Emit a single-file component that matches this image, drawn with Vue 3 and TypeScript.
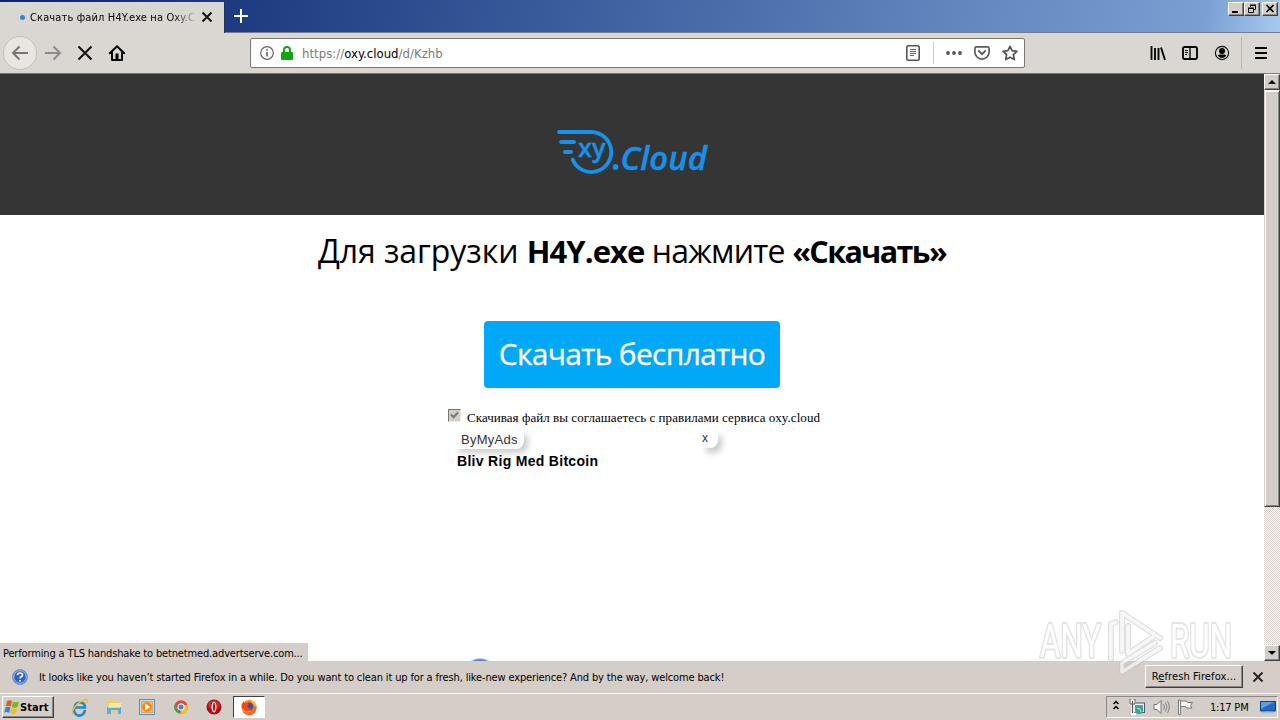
<script setup lang="ts">
interface Part { text: string; kind: string }
const heading: Part[] = [
  { text: 'Для загрузки ', kind: 'plain' },
  { text: 'H4Y.exe', kind: 'file' },
  { text: ' нажмите ', kind: 'verb' },
  { text: '«Скачать»', kind: 'action' },
]
</script>

<template>
  <div class="desktop">
    <header class="tabstrip">
      <div class="tab">
        <i class="busy"></i>
        <span class="tab-title">Скачать файл H4Y.exe на Oxy.C</span>
        <svg class="tab-close" width="12" height="12" viewBox="0 0 12 12"><path d="M1.500 1.500l9 9m0-9l-9 9" stroke="#111" stroke-width="1.900" /></svg>
      </div>
      <svg class="newtab" width="14" height="14" viewBox="0 0 14 14"><path d="M7 0v14M0 7h14" stroke="#fff" stroke-width="2" /></svg>
      <div class="winbtns">
        <span class="wb"><svg width="14" height="12" viewBox="0 0 14 12"><path d="M3 9h6" stroke="#000" stroke-width="2" /></svg></span>
        <span class="wb"><svg width="14" height="12" viewBox="0 0 14 12"><path d="M5.500 4V2.500h5v4H9M5 2h6M3.500 5.500h5v4h-5zM3 5h6" fill="none" stroke="#000" /></svg></span>
        <span class="wb last"><svg width="14" height="12" viewBox="0 0 14 12"><path d="M3.500 2l7 7m0-7l-7 7" stroke="#000" stroke-width="1.600" /></svg></span>
      </div>
    </header>

    <nav class="toolbar">
      <div class="navs">
        <span class="back"><svg width="18" height="16" viewBox="0 0 18 16"><path d="M17 8H2m6.500-6.500L2 8l6.500 6.500" fill="none" stroke="#777" stroke-width="2" /></svg></span>
        <svg class="fwd" width="18" height="16" viewBox="0 0 18 16"><path d="M1 8h15M9.500 1.500L16 8l-6.500 6.500" fill="none" stroke="#8d8b88" stroke-width="2" /></svg>
        <svg class="stop" width="16" height="16" viewBox="0 0 16 16"><path d="M1.500 1.500l13 13m0-13l-13 13" stroke="#111" stroke-width="2.100" /></svg>
        <svg class="home" width="16" height="16" viewBox="0 0 16 16"><path d="M.8 8.300L8 1.200l7.200 7.100M3 7v7.900h10V7" fill="none" stroke="#050505" stroke-width="2" stroke-linejoin="round" stroke-linecap="round" /><path d="M6.500 8.500h3V14h-3z" /></svg>
      </div>
      <div class="urlbar">
        <svg class="info" width="14" height="14" viewBox="0 0 14 14"><circle cx="7" cy="7" r="6.300" fill="none" stroke="#666" stroke-width="1.200" /><path d="M7 6v4.500M7 3v1.700" stroke="#666" stroke-width="1.600" /></svg>
        <svg class="lock" width="12" height="14" viewBox="0 0 12 14"><path d="M3 7V4a3 3 0 016 0v3" fill="none" stroke="#12a512" stroke-width="2" /><rect y="6" width="12" height="8" rx="1" fill="#12a512" /></svg>
        <span class="url">https://<b>oxy.cloud</b>/d/Kzhb</span>
        <svg class="reader" width="14" height="16" viewBox="0 0 14 16"><rect x=".8" y=".8" width="12.400" height="14.400" rx="1.500" fill="none" stroke="#555" stroke-width="1.600" /><path d="M4 4.500h6M4 6.500h6M4 8.500h6M4 10.500h4" stroke="#666" /></svg>
        <i class="sep"></i>
        <svg class="dots" width="16" height="4" viewBox="0 0 16 4"><g fill="#555"><circle cx="2" cy="2" r="1.900" /><circle cx="8" cy="2" r="1.900" /><circle cx="14" cy="2" r="1.900" /></g></svg>
        <svg class="pocket" width="16" height="14" viewBox="0 0 16 14"><path d="M2.300 .9h11.400q1.400 0 1.400 1.500v3.600a7.100 7.100 0 01-14.200 0V2.400Q.9.900 2.300.9z" fill="none" stroke="#5c5c5c" stroke-width="1.700" /><path d="M4.800 5L8 8.200 11.200 5" fill="none" stroke="#5c5c5c" stroke-width="1.800" stroke-linecap="round" /></svg>
        <svg class="star" width="16" height="16" viewBox="0 0 16 16"><path d="M8 1.300l2.100 4.400 4.800.6-3.500 3.400.9 4.900L8 12.200l-4.300 2.400.9-4.900L1.100 6.300l4.800-.6z" fill="none" stroke="#555" stroke-width="1.700" stroke-linejoin="round" /></svg>
      </div>
      <div class="tools">
        <svg width="16" height="16" viewBox="0 0 16 16"><path d="M1.500 1v14M5 3v12M8.500 3v12M11 2.500L15 15" stroke="#080808" stroke-width="1.900" /></svg>
        <svg width="16" height="14" viewBox="0 0 16 14"><rect x="1" y="1" width="14" height="12" rx="1.500" fill="none" stroke="#080808" stroke-width="1.900" /><path d="M8 1v12" stroke="#080808" stroke-width="1.400" /><path d="M3 4.500h3M3 6.500h3M3 8.500h2" stroke="#080808" /></svg>
        <svg width="16" height="16" viewBox="0 0 16 16"><circle cx="8" cy="8" r="6.600" fill="none" stroke="#080808" stroke-width="1.100" /><circle cx="8" cy="6" r="3" /><path d="M3.700 10.500q1-1 2.300-1h4q1.300 0 2.300 1Q10.500 13 8 13t-4.300-2.500z" /></svg>
        <i class="toolsep"></i>
        <svg width="12" height="12" viewBox="0 0 12 12"><path d="M0 1h12M0 6h12M0 11h12" stroke="#080808" stroke-width="2" /></svg>
      </div>
    </nav>

    <main class="viewport">
      <section class="page">
        <div class="banner">
          <svg class="logo" width="152" height="48" viewBox="0 0 152 48">
            <g fill="none" stroke="#1592ec" stroke-width="3.800" stroke-linecap="round">
              <path d="M3 4h32.500a20 20 0 11-18.800 27.500" />
              <path d="M5 14h13M9 24h6" />
            </g>
            <circle cx="59.500" cy="39" r="2.900" fill="#1592ec" />
            <g fill="#1592ec" font-family="'Open Sans', sans-serif" font-weight="600">
              <text x="22" y="29" font-size="26" textLength="27.500" lengthAdjust="spacingAndGlyphs" stroke="#1592ec" stroke-width=".4">xy</text>
              <text x="64.500" y="42" font-size="33" font-style="italic" textLength="86.500" lengthAdjust="spacingAndGlyphs" stroke="#1592ec" stroke-width=".4">Cloud</text>
            </g>
          </svg>
        </div>
        <h1 class="heading"><span v-for="p in heading" :key="p.text" :class="p.kind">{{ p.text }}</span></h1>
        <button class="download">Скачать бесплатно</button>
        <div class="agree">
          <span class="check"><svg width="9" height="9" viewBox="0 0 9 9"><path d="M1 3.500l2.500 2.800L8 1.500" fill="none" stroke="#777" stroke-width="2" /></svg></span>
          <span class="terms">Скачивая файл вы соглашаетесь с правилами сервиса oxy.cloud</span>
        </div>
        <div class="adbar"><span class="adname">ByMyAds</span><span class="adclose">x</span></div>
        <div class="adtext">Bliv Rig Med Bitcoin</div>
        <i class="bubble"></i>
        <div class="status"><span>Performing a TLS handshake to betnetmed.advertserve.com...</span></div>
      </section>
      <aside class="scroll">
        <span class="sbtn"><i class="up"></i></span>
        <span class="thumb"></span>
        <span class="track"></span>
        <span class="sbtn"><i class="down"></i></span>
      </aside>
    </main>

    <div class="notice">
      <svg class="help" width="16" height="16" viewBox="0 0 16 16"><circle cx="8" cy="8" r="7.500" fill="#2c62c8" stroke="#7694c6" /><circle cx="8" cy="8" r="6.300" fill="none" stroke="#d3e2f7" stroke-width=".8" /><path d="M5.500 6.200Q5.500 4 8 4t2.500 2q0 1.200-1.300 1.800Q8 8.400 8 9.500M8 10.900v1.700" fill="none" stroke="#fff" stroke-width="1.700" /></svg>
      <span class="noticetext">It looks like you haven’t started Firefox in a while. Do you want to clean it up for a fresh, like-new experience? And by the way, welcome back!</span>
      <button class="refresh"><span>R<u>e</u>fresh Firefox...</span></button>
      <svg class="nclose" width="12" height="12" viewBox="0 0 12 12"><path d="M1.500 1.500l9 9m0-9l-9 9" stroke="#222" stroke-width="1.900" /></svg>
    </div>

    <footer class="taskbar">
      <button class="start">
        <svg width="16" height="15" viewBox="0 0 16 15"><path d="M3 1q2.500-1.500 5 0L6.800 6.500q-2.500-1.400-5 0z" fill="#e35b21" /><path d="M9 1.500q2.500 1.400 6 0l-1.500 5.500q-2.600 1.300-5.700 0z" fill="#76b82a" /><path d="M1.500 7.500q2.500-1.400 5 0l-1.300 5.200q-2.500-1.200-5 0z" fill="#2f87d7" /><path d="M7.500 8q2.500 1.400 5.800 0L12 13.300q-2.700 1.200-5.700 0z" fill="#f6bd19" /></svg>
        <span>Start</span>
      </button>
      <div class="quick">
        <svg width="18" height="18" viewBox="0 0 18 18"><path d="M13.800 12A5.400 5.400 0 113.700 9.500H14Q14 4.500 9 4.500T3.700 9.500" fill="none" stroke="#2189d4" stroke-width="2.600" /><path d="M3 15.500Q0 16 2 12 6 4 14 1.700 18 1 15.500 5" fill="none" stroke="#edbd35" stroke-width="1.500" /></svg>
        <svg width="18" height="18" viewBox="0 0 18 18"><path d="M3 2h5l1 2h6v10H3z" fill="#edcf69" /><path d="M4 5h12v5H4z" fill="#f9e9a2" /><path d="M2 9h14v7h-3v-4H6v4H2z" fill="#5baedb" /><path d="M3 9.500h12" stroke="#b2e2f8" /></svg>
        <svg width="18" height="18" viewBox="0 0 18 18"><rect x="1.500" y="1.500" width="15" height="15" fill="#c8dff2" stroke="#4b91ca" /><rect x="3.500" y="3.500" width="11" height="11" fill="#fbc36c" stroke="#e8a14b" /><circle cx="9" cy="9" r="5" fill="#f4881d" /><path d="M7 5.500l5.500 3.500L7 12.500z" fill="#fff" /></svg>
        <svg width="18" height="18" viewBox="0 0 18 18"><circle cx="9" cy="9" r="6.700" fill="#e24635" /><path d="M3 5.800L8 15.600a6.700 6.700 0 01-5-9.800z" fill="#35a853" /><path d="M8 15.600L12 7h3.500A6.700 6.700 0 018 15.600z" fill="#fbc116" /><circle cx="9" cy="9" r="3.100" fill="#4285e8" stroke="#fff" stroke-width="1.100" /></svg>
        <svg width="18" height="18" viewBox="0 0 18 18"><circle cx="9" cy="9" r="7.500" fill="#a80d14" /><ellipse cx="9" cy="7" rx="6" ry="4.500" fill="#d9403d" opacity=".6" /><ellipse cx="9" cy="9" rx="2.500" ry="5.500" fill="#f5dcda" /><ellipse cx="9" cy="9" rx="1" ry="4" fill="#a80d14" /></svg>
      </div>
      <div class="active">
        <svg width="18" height="18" viewBox="0 0 18 18"><circle cx="9" cy="9.500" r="7.500" fill="#ff8a16" /><path d="M9 2q8 1 7.500 8.500Q15.500 17 9 17 4 17 2.500 13 9 17 12 11.500 14 7 9 2z" fill="#f9662a" /><path d="M9 1q7 3 7.300 8L13 6z" fill="#ffc62a" /><circle cx="9" cy="8.500" r="4" fill="#3c4ca8" /><path d="M1.500 9Q1.500 5 4 3v2q3-1 5 1L7 8q1 3 4 2-2 5-7 2z" fill="#f9451f" /></svg>
      </div>
      <div class="tray">
        <svg class="chev" width="8" height="11" viewBox="0 0 8 11"><path d="M1.500 4L4 1.500 6.500 4M1.500 9L4 6.500 6.500 9" fill="none" stroke="#000" stroke-width="1.500" /></svg>
        <svg class="net" width="16" height="16" viewBox="0 0 16 16"><rect x="4" y="4" width="11.500" height="9.500" fill="#eef3f2" stroke="#557" /><rect x="6" y="6" width="8" height="6" fill="#4aa7b5" /><circle cx="10" cy="11" r="4" fill="#3ba28b" /><path d="M8 9l3 1 1 3" stroke="#b4ead3" fill="none" /><path d="M1.500 1v4h4V1M3.500 5v10H7" fill="none" stroke="#fff" stroke-width="2.500" /><path d="M1 0v5h5V0M3.500 2v3M3.500 5v9" fill="none" stroke="#555" /></svg>
        <svg class="vol" width="17" height="16" viewBox="0 0 17 16"><path d="M1 5.500h3l4-4v13l-4-4H1z" fill="#f8f8f8" stroke="#777" /><path d="M10.500 5q2 3 0 6M12.500 3.500q3 4.500 0 9M14.500 2q3.500 6 0 12" fill="none" stroke="#888" /></svg>
        <svg class="flag" width="17" height="16" viewBox="0 0 17 16"><path d="M1.500 1h2v14.500h-2z" fill="#fff" stroke="#777" /><path d="M3.500 2h6l1 1.500h5l-2 3 1.500 2.500H9.500L8.500 7.500h-5z" fill="#f7f7f7" stroke="#777" /></svg>
        <span class="clock">1:17 PM</span>
        <svg class="desk" width="16" height="14" viewBox="0 0 16 14"><path d="M.5 1.500h15v9.500h-15z" fill="#2469c0" stroke="#153f7c" /><path d="M1 2h14Q9 4 1 9z" fill="#5b9ee4" /><path d="M2 12q6-1 12 0v1.500H2z" fill="#a8bcd6" /></svg>
      </div>
    </footer>

    <div class="watermark">
      <svg width="200" height="70" viewBox="0 0 200 70">
        <g stroke-linejoin="round" font-family="Roboto, sans-serif" font-weight="400" font-size="47" fill="#fff" stroke="#c4c4c4" stroke-opacity=".55" stroke-width="4" paint-order="stroke">
          <text x="4" y="52" textLength="61" lengthAdjust="spacingAndGlyphs">ANY</text>
          <text x="134" y="52" textLength="62" lengthAdjust="spacingAndGlyphs">RUN</text>
        </g>
        <g fill="none" stroke-linejoin="round" stroke-linecap="round">
          <path d="M75 54V19l5-2M86 46V8l38 25M92 21v28l25-17M86 67l38-24M86 67v-9l33-20" stroke="#bbb" stroke-opacity=".55" stroke-width="6" />
          <path d="M75 54V19l5-2M86 46V8l38 25M92 21v28l25-17M86 67l38-24M86 67v-9l33-20" stroke="#fff" stroke-opacity=".75" stroke-width="3.600" />
        </g>
      </svg>
    </div>
  </div>
</template>

<style>
html, body { margin: 0; overflow: hidden; }
</style>

<style scoped>
* { box-sizing: border-box; }
svg { display: block; flex: none; overflow: visible; }
button { font: inherit; color: inherit; padding: 0; margin: 0; }
.desktop { position: relative; width: 1280px; height: 720px; display: flex; flex-direction: column; overflow: hidden; background: #d5cec8; font-family: "DejaVu Sans Condensed", "DejaVu Sans", sans-serif; font-size: 11px; color: #000; white-space: nowrap; }

.tabstrip { height: 33px; flex: none; display: flex; align-items: flex-start; background: linear-gradient(100deg, #0a246a 0%, #1e3a80 18%, #385a9b 42%, #5c80b9 70%, #7a9fd2 94%, #a6caf0 100%); border-bottom: 1px solid #777f8c; }
.tab { width: 225px; height: 33px; margin-top: 2px; background: #dad6d1; display: flex; align-items: center; padding: 0 0 3px 20px; border-right: 1px solid #1b3267; }
.busy { width: 5px; height: 5px; border-radius: 50%; background: #2a8af0; margin-right: 5px; flex: none; }
.tab-title { width: 168px; letter-spacing: .14px; -webkit-mask-image: linear-gradient(90deg, #000 142px, transparent 170px); mask-image: linear-gradient(90deg, #000 142px, transparent 170px); }
.tab-close { margin-left: 3px; }
.newtab { margin: 9px 0 0 9px; }
.winbtns { margin: 2px 2px 0 auto; display: flex; }
.wb { width: 16px; height: 14px; background: #d5cec8; border: 1px solid; border-color: #fff #404040 #404040 #fff; box-shadow: inset -1px -1px #8c8781; }
.wb.last { margin-left: 2px; }

.toolbar { height: 41px; flex: none; display: flex; align-items: center; background: #dad6d1; border-bottom: 1px solid #777; }
.navs { display: flex; align-items: center; width: 250px; padding-left: 3px; }
.back { width: 34px; height: 34px; border-radius: 50%; background: #e9e6e2; border: 1px solid #c3bfba; display: flex; align-items: center; justify-content: center; }
.fwd { margin-left: 7px; }
.stop { margin-left: 15px; }
.home { margin-left: 16px; }
.urlbar { width: 775px; height: 30px; background: #fff; border: 1px solid #777; border-radius: 2px; display: flex; align-items: center; padding-left: 9px; }
.lock { margin-left: 7px; }
.url { margin-left: 9px; font-size: 13px; letter-spacing: .03px; color: #7b7b7b; flex: 1; }
.url b { font-weight: 400; color: #000; }
.sep { width: 1px; height: 22px; background: #ccc; margin: 0 12px 0 13px; }
.pocket { margin: 0 12px; }
.star { margin-right: 6px; }
.tools { flex: 1; display: flex; align-items: center; justify-content: flex-end; gap: 16px; padding-right: 13px; }
.toolsep { width: 1px; height: 32px; background: #bbb7b1; margin: 0 -3px 0 -5px; }

.viewport { height: 587px; flex: none; display: flex; }
.page { position: relative; width: 1264px; height: 587px; background: #fff; display: flex; flex-direction: column; align-items: center; overflow: hidden; }
.banner { width: 100%; height: 141px; flex: none; background: #353535; display: flex; justify-content: center; align-items: flex-start; padding-top: 54px; }
.heading { margin: 13px 0 0; height: 46px; font: 400 32px/46px "Open Sans", sans-serif; white-space: pre; }
.plain { letter-spacing: -.05px; }
.file { font-weight: 700; font-size: 31px; letter-spacing: -.95px; }
.verb { letter-spacing: -.8px; }
.action { font-weight: 700; font-size: 30.500px; letter-spacing: -1.600px; }
.download { margin-top: 47px; width: 296px; height: 67px; flex: none; background: #02a8f8; color: #fff; border: 0; border-radius: 4px; font: 400 30px/64px "Open Sans", sans-serif; letter-spacing: -.7px; padding-bottom: 2px; -webkit-text-stroke: .3px #fff; }
.agree { width: 368px; margin: 21px 0 0; display: flex; height: 18px; }
.check { width: 13px; height: 13px; flex: none; padding: 1px; background: #d5cec8; border: 1px solid; border-color: #777 #eee #eee #777; }
.terms { margin-left: 6px; font: 13px/18px "Liberation Serif", serif; letter-spacing: .05px; }
.adbar { width: 264px; display: flex; justify-content: space-between; height: 20px; margin: 4px 0 0 -90px; font: 13px/18px "Liberation Sans", sans-serif; color: #333; }
.adname { height: 18px; width: 69px; padding-left: 6px; letter-spacing: .25px; border-radius: 0 0 8px; background: #fff; box-shadow: 4px 4px 6px #ccc; clip-path: inset(0 -15px -15px 0); }
.adclose { height: 17px; width: 16px; font-size: 12px; line-height: 15px; border-radius: 0 0 8px; box-shadow: 4px 5px 6px #ccc; clip-path: inset(0 -15px -15px 0); margin-right: 1px; }
.adtext { position: relative; width: 350px; margin-top: 2px; font: bold 14px/17px "Liberation Sans", sans-serif; letter-spacing: .3px; }
.bubble { position: absolute; left: 464px; top: 585px; width: 32px; height: 32px; border-radius: 50%; background: #5c84b8; box-shadow: 0 0 0 1px #c5dcf5; }
.status { position: absolute; left: 0; bottom: 0; width: 308px; height: 18px; background: #d5cec8; padding-left: 3px; line-height: 21px; letter-spacing: -.15px; }

.scroll { width: 16px; display: flex; flex-direction: column; }
.sbtn { height: 16px; flex: none; background: #d5cec8; border: 1px solid; border-color: #fff #404040 #404040 #fff; box-shadow: inset -1px -1px #888; display: flex; align-items: center; justify-content: center; }
.up, .down { border: 4px solid transparent; border-top: 0; border-bottom: 4px solid #000; }
.down { border-bottom: 0; border-top: 4px solid #000; }
.thumb { height: 417px; flex: none; background: #d5cec8; border: 1px solid; border-color: #fff #404040 #404040 #d5cec8; box-shadow: inset 1px 1px #fff, inset -1px -1px #888; }
.track { flex: 1; background: repeating-conic-gradient(#d5cec8 0 25%, #fff 0 50%) 0 0 / 2px 2px; }

.notice { height: 32px; flex: none; display: flex; align-items: center; background: #d5cec8; padding-left: 12px; }
.noticetext { margin-left: 11px; flex: 1; letter-spacing: -.14px; }
.refresh { width: 98px; height: 23px; margin-top: -2px; letter-spacing: .1px; background: #d5cec8; border: 1px solid; border-color: #fff #404040 #404040 #fff; box-shadow: inset -1px -1px #888; }
.nclose { margin: 0 16px 0 9px; }

.taskbar { height: 27px; flex: none; display: flex; align-items: center; border-top: 1px solid #fff; padding-left: 2px; }
.start { width: 52px; height: 22px; display: flex; align-items: center; padding-left: 1px; background: #d5cec8; border: 1px solid; border-color: #fff #404040 #404040 #fff; box-shadow: inset -1px -1px #888; font-weight: 700; letter-spacing: .1px; }
.quick { display: flex; gap: 15.500px; margin-left: 17px; }
.active { width: 32px; height: 22px; margin-left: 10px; background: #fff; border: 1px solid; border-color: #404040 #fff #fff #404040; display: flex; align-items: center; justify-content: center; }
.tray { margin: 0 2px 0 auto; width: 172px; height: 22px; border: 1px solid; border-color: #888 #fff #fff #888; display: flex; align-items: center; }
.chev { margin: 0 0 3px 5px; }
.net { margin-left: 9px; }
.vol { margin-left: 8px; }
.flag { margin-left: 7px; }
.clock { margin-left: 16px; flex: 1; letter-spacing: -.2px; }
.desk { margin-right: 1px; }

.watermark { position: absolute; left: 1036px; top: 605px; opacity: .85; pointer-events: none; }
</style>
